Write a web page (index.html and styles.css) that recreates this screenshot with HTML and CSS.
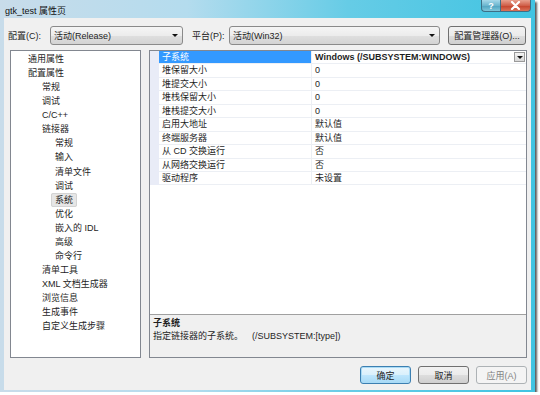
FILE: index.html
```html
<!DOCTYPE html>
<html lang="zh-CN">

<head>
    <meta charset="UTF-8">
    <title>gtk_test 属性页</title>
    <link rel="stylesheet" href="styles.css">
</head>

<body>
    <div class="window">
        <div class="titlebar">
            <span class="title">gtk_test 属性页</span>
            <div class="caption-buttons">
                <span class="cap-help">?</span>
                <span class="cap-close">
                    <svg width="11" height="9" viewBox="0 0 11 9">
                        <path d="M2 1 L9 8 M9 1 L2 8" stroke="#fff" stroke-width="2.2" stroke-linecap="round"/>
                    </svg>
                </span>
            </div>
        </div>

        <div class="client">
            <div class="toolbar">
                <label class="lbl lbl-config">配置(C):</label>
                <div class="combo combo-config"><span>活动(Release)</span><i class="arrow"></i></div>
                <label class="lbl lbl-platform">平台(P):</label>
                <div class="combo combo-platform"><span>活动(Win32)</span><i class="arrow"></i></div>
                <button class="btn btn-manager">配置管理器(O)...</button>
            </div>

            <div class="panels">
                <ul class="tree">
                    <li class="l1">通用属性</li>
                    <li class="l1">配置属性</li>
                    <li class="l2">常规</li>
                    <li class="l2">调试</li>
                    <li class="l2">C/C++</li>
                    <li class="l2">链接器</li>
                    <li class="l3">常规</li>
                    <li class="l3">输入</li>
                    <li class="l3">清单文件</li>
                    <li class="l3">调试</li>
                    <li class="l3"><span class="selected">系统</span></li>
                    <li class="l3">优化</li>
                    <li class="l3">嵌入的 IDL</li>
                    <li class="l3">高级</li>
                    <li class="l3">命令行</li>
                    <li class="l2">清单工具</li>
                    <li class="l2">XML 文档生成器</li>
                    <li class="l2">浏览信息</li>
                    <li class="l2">生成事件</li>
                    <li class="l2">自定义生成步骤</li>
                </ul>

                <div class="grid-panel">
                    <div class="grid">
                        <div class="row active">
                            <div class="gutter"></div>
                            <div class="name">子系统</div>
                            <div class="value bold">Windows (/SUBSYSTEM:WINDOWS)<span class="drop"><i class="arrow"></i></span></div>
                        </div>
                        <div class="row"><div class="gutter"></div><div class="name">堆保留大小</div><div class="value">0</div></div>
                        <div class="row"><div class="gutter"></div><div class="name">堆提交大小</div><div class="value">0</div></div>
                        <div class="row"><div class="gutter"></div><div class="name">堆栈保留大小</div><div class="value">0</div></div>
                        <div class="row"><div class="gutter"></div><div class="name">堆栈提交大小</div><div class="value">0</div></div>
                        <div class="row"><div class="gutter"></div><div class="name">启用大地址</div><div class="value">默认值</div></div>
                        <div class="row"><div class="gutter"></div><div class="name">终端服务器</div><div class="value">默认值</div></div>
                        <div class="row"><div class="gutter"></div><div class="name">从 CD 交换运行</div><div class="value">否</div></div>
                        <div class="row"><div class="gutter"></div><div class="name">从网络交换运行</div><div class="value">否</div></div>
                        <div class="row"><div class="gutter"></div><div class="name">驱动程序</div><div class="value">未设置</div></div>
                    </div>
                    <div class="desc">
                        <div class="desc-title">子系统</div>
                        <div class="desc-text">指定链接器的子系统。<span class="switch">(/SUBSYSTEM:[type])</span></div>
                    </div>
                </div>
            </div>

            <div class="actions">
                <button class="btn btn-default">确定</button>
                <button class="btn">取消</button>
                <button class="btn" disabled>应用(A)</button>
            </div>
        </div>
    </div>
</body>

</html>
```

FILE: styles.css
```css
body {
    margin: 0;
    background: #fff;
    font-family: "Liberation Sans", "Noto Sans CJK SC", sans-serif;
    font-size: 9px;
    color: #1e1e1e;
}

.window {
    width: 535px;
    height: 392px;
    box-sizing: border-box;
    padding: 0 4px 3px 4px;
    display: flex;
    flex-direction: column;
    background: linear-gradient(to right, #c8dcea 0%, #b4dcee 35%, #66cce6 65%, #40c4e2 100%);
    box-shadow: 2px 2px 2px rgba(0, 0, 0, 0.65);
}

.titlebar {
    height: 18px;
    display: flex;
    align-items: flex-start;
    flex-shrink: 0;
}

.title {
    margin-left: 1px;
    margin-top: 4px;
    color: #111;
}

.caption-buttons {
    margin-left: auto;
    display: flex;
}

.cap-help,
.cap-close {
    height: 12px;
    display: flex;
    align-items: center;
    justify-content: center;
    box-sizing: border-box;
    border: 1px solid #3d6f86;
    border-top: none;
}

.cap-help {
    width: 19px;
    border-radius: 0 0 0 4px;
    border-right: none;
    background: linear-gradient(#a6d9ea, #6cb6cf 50%, #4ea2bf 51%, #7ec6da);
    color: #fff;
    font-weight: bold;
    font-size: 9px;
}

.cap-close {
    width: 31px;
    border-radius: 0 0 4px 0;
    background: linear-gradient(#e8a08e, #d0604a 50%, #c4412a 51%, #d9735a);
}

.client {
    flex: 1;
    background: #f0f0f0;
    padding: 8px 4px 6px 4px;
    display: flex;
    flex-direction: column;
}

.toolbar {
    height: 19px;
    display: flex;
    align-items: center;
}

.lbl {
    white-space: nowrap;
}

.lbl-config {
    width: 42px;
}

.lbl-platform {
    margin-left: 9px;
    width: 37px;
}

.combo {
    height: 19px;
    box-sizing: border-box;
    border: 1px solid #8a8a8a;
    border-radius: 3px;
    background: linear-gradient(#f5f5f5, #ececec 50%, #dfdfdf 51%, #d3d3d3);
    display: flex;
    align-items: center;
    padding: 0 4px 0 3px;
}

.combo span {
    flex: 1;
}

.combo-config {
    width: 133px;
}

.combo-platform {
    width: 211px;
}

.arrow {
    width: 0;
    height: 0;
    border-left: 3px solid transparent;
    border-right: 3px solid transparent;
    border-top: 3px solid #111;
}

.btn {
    height: 19px;
    box-sizing: border-box;
    border: 1px solid #707070;
    border-radius: 3px;
    background: linear-gradient(#f2f2f2, #ebebeb 50%, #dddddd 51%, #cfcfcf);
    font-family: inherit;
    font-size: 9px;
    color: #1e1e1e;
    padding: 0;
}

.btn-manager {
    margin-left: 8px;
    width: 78px;
}

.panels {
    margin-top: 5px;
    margin-left: 2px;
    height: 308px;
    display: flex;
    gap: 8px;
}

.tree {
    width: 131px;
    box-sizing: border-box;
    margin: 0;
    padding: 1px 0 0 0;
    list-style: none;
    background: #fff;
    border: 1px solid #828790;
}

.tree li {
    height: 14.07px;
    line-height: 14.07px;
    white-space: nowrap;
}

.tree .l1 {
    padding-left: 17px;
}

.tree .l2 {
    padding-left: 31px;
}

.tree .l3 {
    padding-left: 44px;
}

.tree .selected {
    margin-left: -4px;
    padding: 1px 3px;
    background: #e6e6e6;
    border: 1px solid #d3d3d3;
    border-radius: 2px;
}

.grid-panel {
    width: 378px;
    box-sizing: border-box;
    border: 1px solid #828790;
    display: flex;
    flex-direction: column;
}

.grid {
    flex: 1;
    background: #fff;
}

.row {
    height: 13.44px;
    display: flex;
    box-sizing: border-box;
}

.gutter {
    width: 9px;
    background: #e9ecf7;
}

.name {
    width: 152px;
    padding-left: 3px;
    box-sizing: border-box;
    border-bottom: 1px solid #eceff4;
    line-height: 12.44px;
}

.value {
    flex: 1;
    padding-left: 3px;
    border-left: 1px solid #eceff4;
    border-bottom: 1px solid #eceff4;
    line-height: 12.44px;
    display: flex;
}

.row.active .name {
    background: #3399ff;
    color: #fff;
}

.bold {
    font-weight: bold;
}

.drop {
    margin-left: auto;
    margin-right: 1px;
    margin-top: 1px;
    width: 11px;
    height: 10px;
    box-sizing: border-box;
    border: 1px solid #9a9a9a;
    background: linear-gradient(#f4f4f4, #d8d8d8);
    display: flex;
    align-items: center;
    justify-content: center;
}

.desc {
    height: 43px;
    box-sizing: border-box;
    border-top: 1px solid #a0a0a0;
    background: #f0f0f0;
    padding: 2px 0 0 3px;
}

.desc-title {
    font-weight: bold;
    line-height: 13px;
}

.desc-text {
    line-height: 13px;
}

.switch {
    margin-left: 9px;
}

.actions {
    margin-top: 8px;
    display: flex;
    justify-content: flex-end;
    gap: 7px;
}

.actions .btn {
    width: 51px;
    height: 18px;
}

.actions .btn-default {
    border-color: #3c7fb1;
    background: linear-gradient(#eaf6fd, #d9f0fc 50%, #bee6fd 51%, #a7d9f5);
    box-shadow: inset 0 0 0 1px #a9dbf6;
}

.actions .btn:disabled {
    border-color: #adb2b5;
    background: #f4f4f4;
    color: #838383;
}
```
